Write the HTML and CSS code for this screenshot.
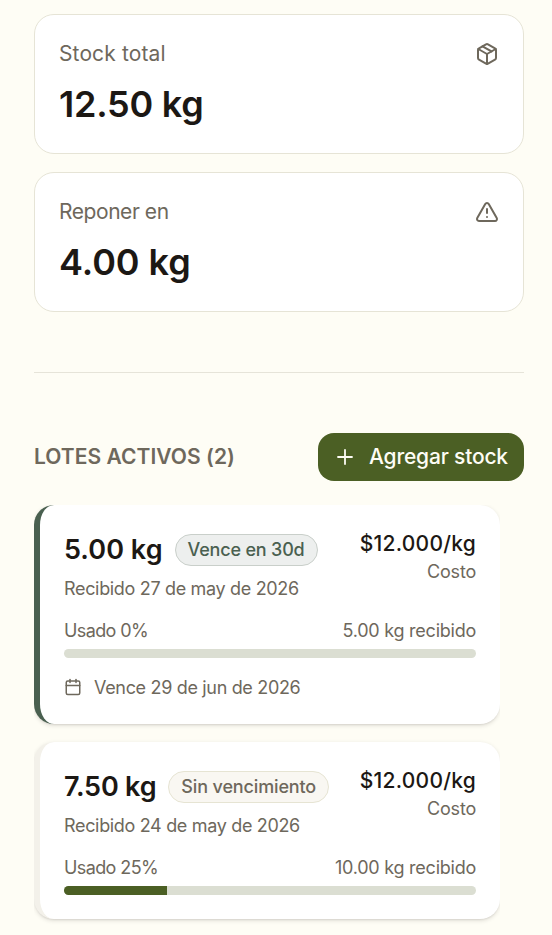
FILE: index.html
```html
<!DOCTYPE html>
<html lang="es">
<head>
<meta charset="utf-8">
<title>Stock</title>
<link rel="stylesheet" href="styles.css">
</head>
<body>
<main class="page">
  <section class="stats">
    <article class="stat">
      <div class="stat-head">
        <span class="stat-label stat-label-total">Stock total</span>
        <svg class="icon icon-stat" viewBox="0 0 24 24"><path d="M11 21.73a2 2 0 0 0 2 0l7-4A2 2 0 0 0 21 16V8a2 2 0 0 0-1-1.73l-7-4a2 2 0 0 0-2 0l-7 4A2 2 0 0 0 3 8v8a2 2 0 0 0 1 1.73z"/><path d="M12 22V12"/><path d="M3.29 7 12 12l8.71-5"/><path d="m7.5 4.27 9 5.15"/></svg>
      </div>
      <div class="stat-value">12.50 kg</div>
    </article>
    <article class="stat">
      <div class="stat-head">
        <span class="stat-label stat-label-reorder">Reponer en</span>
        <svg class="icon icon-stat" viewBox="0 0 24 24"><path d="m21.73 18-8-14a2 2 0 0 0-3.48 0l-8 14A2 2 0 0 0 4 21h16a2 2 0 0 0 1.73-3"/><path d="M12 9v4"/><path d="M12 17h.01"/></svg>
      </div>
      <div class="stat-value stat-value-reorder">4.00 kg</div>
    </article>
  </section>

  <hr class="divider">

  <header class="section-head">
    <h2 class="section-title">LOTES ACTIVOS (2)</h2>
    <button class="add-button" type="button">
      <svg class="icon icon-plus" viewBox="0 0 24 24"><path d="M5 12h14"/><path d="M12 5v14"/></svg>
      <span class="add-label">Agregar stock</span>
    </button>
  </header>

  <section class="batches">
    <article class="batch batch-expiring">
      <div class="batch-head">
        <div>
          <div class="batch-title"><span class="quantity">5.00 kg</span><span class="badge badge-expiring">Vence en 30d</span></div>
          <p class="received">Recibido 27 de may de 2026</p>
        </div>
        <div class="cost"><div class="price">$12.000/kg</div><div class="cost-label">Costo</div></div>
      </div>
      <div class="usage"><span class="used">Usado 0%</span><span class="usage-total">5.00 kg recibido</span></div>
      <div class="bar"><div class="bar-fill" style="width:0%"></div></div>
      <div class="expiry">
        <svg class="icon icon-calendar" viewBox="0 0 24 24"><path d="M8 2v4"/><path d="M16 2v4"/><rect width="18" height="18" x="3" y="4" rx="2"/><path d="M3 10h18"/></svg>
        <span>Vence 29 de jun de 2026</span>
      </div>
    </article>
    <article class="batch">
      <div class="batch-head">
        <div>
          <div class="batch-title"><span class="quantity quantity-tight">7.50 kg</span><span class="badge">Sin vencimiento</span></div>
          <p class="received">Recibido 24 de may de 2026</p>
        </div>
        <div class="cost"><div class="price">$12.000/kg</div><div class="cost-label">Costo</div></div>
      </div>
      <div class="usage"><span class="used">Usado 25%</span><span class="usage-total">10.00 kg recibido</span></div>
      <div class="bar"><div class="bar-fill" style="width:25%"></div></div>
    </article>
  </section>
</main>
</body>
</html>
```
FILE: styles.css
```css
* { box-sizing: border-box; }
body {
  margin: 0;
  background: #fefdf5;
  color: #1c1814;
  font-family: Inter, "Liberation Sans", sans-serif;
  font-size: 18px;
}
h2, p { margin: 0; }
.page { padding: 14px 28px 0 34px; }
.icon {
  flex: none;
  fill: none;
  stroke: currentColor;
  stroke-width: 2;
  stroke-linecap: round;
  stroke-linejoin: round;
}
.stats { display: grid; gap: 18px; }
.stat {
  height: 140px;
  padding: 24px;
  background: #fff;
  border: 1px solid #e6e4d6;
  border-radius: 20px;
}
.stat-head {
  display: flex;
  align-items: center;
  justify-content: space-between;
  height: 30px;
  color: #6e685c;
  font-size: 21px;
}
.stat-label { padding-bottom: 2px; }
.stat-label-total { letter-spacing: 0.12px; }
.stat-label-reorder { letter-spacing: -0.44px; }
.icon-stat { width: 24px; height: 24px; }
.stat-value {
  margin-top: 11px;
  font-size: 36px;
  line-height: 48px;
  font-weight: 600;
  letter-spacing: -0.25px;
}
.stat-value-reorder { letter-spacing: -0.05px; }
.divider {
  height: 1px;
  margin: 60px 0;
  border: 0;
  background: #e6e4d9;
}
.section-head {
  display: flex;
  align-items: center;
  justify-content: space-between;
  height: 48px;
}
.section-title {
  padding-bottom: 2px;
  color: #6e685c;
  font-size: 21px;
  font-weight: 600;
  letter-spacing: 0.04px;
}
.add-button {
  display: flex;
  align-items: center;
  gap: 12px;
  width: 206px;
  height: 48px;
  padding: 0 0 0 15px;
  border: 0;
  border-radius: 16px;
  background: #4b5f24;
  color: #fefdf5;
  font: 500 21px Inter, "Liberation Sans", sans-serif;
  letter-spacing: -0.18px;
  white-space: nowrap;
}
.add-label { padding-bottom: 2px; }
.icon-plus { width: 24px; height: 24px; stroke-width: 1.8; }
.batches {
  display: grid;
  gap: 18px;
  margin: 24px 24px 0 0;
  padding-bottom: 12px;
  overflow: clip;
}
.batch {
  padding: 24px;
  background: #fff;
  border-left: 6px solid #f3f1ea;
  border-radius: 20px;
  box-shadow: 0 1.5px 4px rgba(28, 24, 20, 0.1), 0 1.5px 2px -1px rgba(28, 24, 20, 0.1);
}
.batch-expiring { border-left-color: #4a6050; }
.batch-head {
  display: flex;
  justify-content: space-between;
  white-space: nowrap;
}
.batch-title {
  display: flex;
  align-items: center;
  gap: 12px;
  height: 42px;
}
.quantity {
  padding-bottom: 2px;
  font-size: 27px;
  font-weight: 600;
  letter-spacing: 0.05px;
}
.quantity-tight { letter-spacing: -0.21px; }
.badge {
  height: 32px;
  padding: 0 12px;
  border: 1px solid #e6e4d3;
  border-radius: 16px;
  background: #f9f7f2;
  color: #6e685c;
  font-weight: 500;
  line-height: 30px;
  letter-spacing: -0.14px;
}
.badge-expiring {
  border-color: #c9cfca;
  background: #edefee;
  color: #4a6050;
  letter-spacing: -0.19px;
}
.received {
  margin-top: 4px;
  color: #6e685c;
  line-height: 27px;
  letter-spacing: -0.33px;
}
.cost { text-align: right; }
.price {
  font-size: 21px;
  font-weight: 500;
  line-height: 30px;
  letter-spacing: 0.25px;
}
.cost-label {
  color: #6e685c;
  line-height: 25px;
  letter-spacing: -0.2px;
}
.usage {
  display: flex;
  justify-content: space-between;
  margin-top: 15px;
  color: #6e685c;
  line-height: 27px;
}
.used { letter-spacing: -0.6px; }
.usage-total { letter-spacing: -0.24px; }
.bar {
  height: 9px;
  margin-top: 5px;
  overflow: hidden;
  border-radius: 5px;
  background: #dbded2;
}
.bar-fill { height: 100%; background: #4b5f24; }
.expiry {
  display: flex;
  align-items: center;
  gap: 12px;
  height: 26px;
  margin-top: 16px;
  color: #6e685c;
  letter-spacing: -0.33px;
}
.icon-calendar { width: 18px; height: 18px; }
```
